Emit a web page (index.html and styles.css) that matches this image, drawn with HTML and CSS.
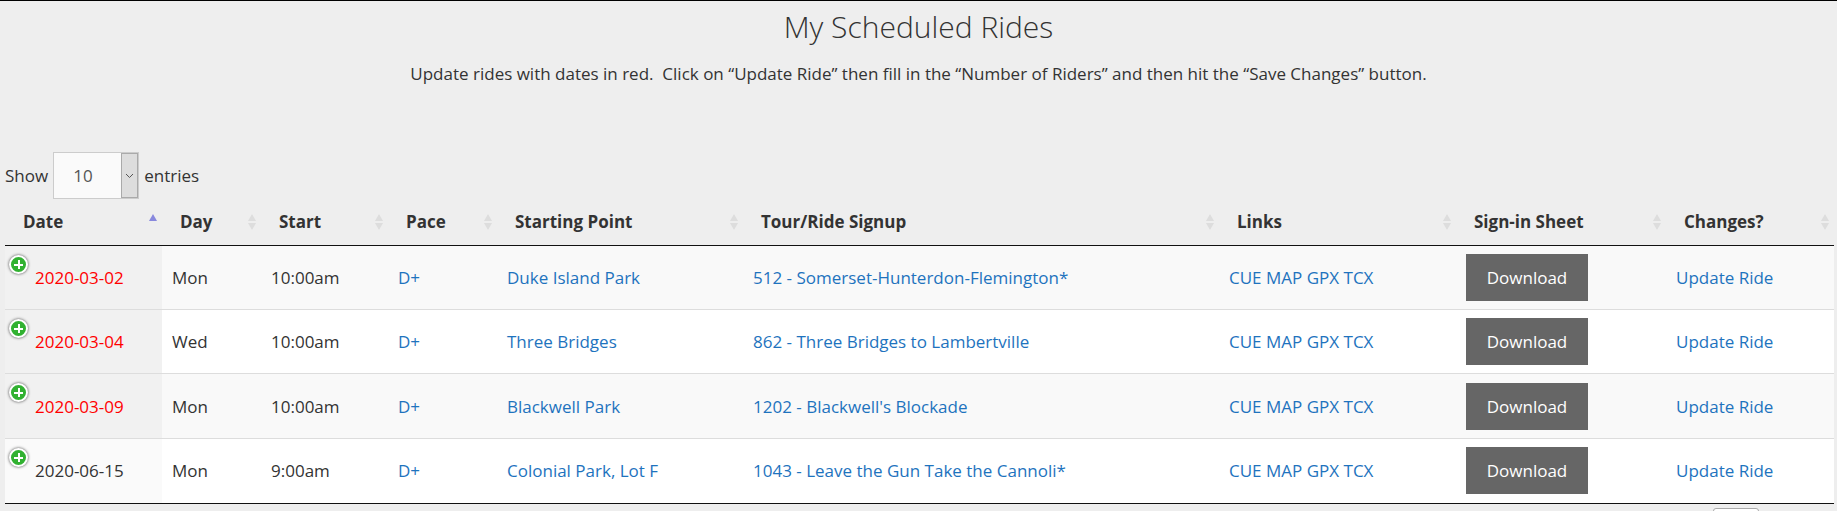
FILE: index.html
```html
<!DOCTYPE html>
<html lang="en">
<head>
<meta charset="utf-8">
<title>My Scheduled Rides</title>
<link rel="stylesheet" href="styles.css">
</head>
<body>
<h1 class="title">My Scheduled Rides</h1>
<p class="intro">Update rides with dates in red.&nbsp; Click on “Update Ride” then fill in the “Number of Riders” and then hit the “Save Changes” button.</p>
<div class="wrap">
  <div class="length">Show <span class="select"><span class="select-val">10</span><span class="select-btn"><svg width="9" height="6" viewBox="0 0 9 6"><path d="M1 1l3.5 3.5L8 1" fill="none" stroke="#555" stroke-width="1"/></svg></span></span> entries</div>
  <table class="rides">
    <colgroup>
      <col class="c1"><col class="c2"><col class="c3"><col class="c4"><col class="c5"><col class="c6"><col class="c7"><col class="c8"><col class="c9">
    </colgroup>
    <thead>
      <tr>
        <th class="asc">Date</th><th>Day</th><th>Start</th><th>Pace</th><th>Starting Point</th><th>Tour/Ride Signup</th><th>Links</th><th>Sign-in Sheet</th><th>Changes?</th>
      </tr>
    </thead>
    <tbody>
      <tr class="odd">
        <td class="date late"><span class="plus"></span>2020-03-02</td><td>Mon</td><td>10:00am</td><td><a href="#">D+</a></td><td><a href="#">Duke Island Park</a></td><td><a href="#">512 - Somerset-Hunterdon-Flemington*</a></td><td><a href="#">CUE</a> <a href="#">MAP</a> <a href="#">GPX</a> <a href="#">TCX</a></td><td><a class="btn" href="#">Download</a></td><td><a href="#">Update Ride</a></td>
      </tr>
      <tr>
        <td class="date late"><span class="plus"></span>2020-03-04</td><td>Wed</td><td>10:00am</td><td><a href="#">D+</a></td><td><a href="#">Three Bridges</a></td><td><a href="#">862 - Three Bridges to Lambertville</a></td><td><a href="#">CUE</a> <a href="#">MAP</a> <a href="#">GPX</a> <a href="#">TCX</a></td><td><a class="btn" href="#">Download</a></td><td><a href="#">Update Ride</a></td>
      </tr>
      <tr class="odd">
        <td class="date late"><span class="plus"></span>2020-03-09</td><td>Mon</td><td>10:00am</td><td><a href="#">D+</a></td><td><a href="#">Blackwell Park</a></td><td><a href="#">1202 - Blackwell's Blockade</a></td><td><a href="#">CUE</a> <a href="#">MAP</a> <a href="#">GPX</a> <a href="#">TCX</a></td><td><a class="btn" href="#">Download</a></td><td><a href="#">Update Ride</a></td>
      </tr>
      <tr>
        <td class="date"><span class="plus"></span>2020-06-15</td><td>Mon</td><td>9:00am</td><td><a href="#">D+</a></td><td><a href="#">Colonial Park, Lot F</a></td><td><a href="#">1043 - Leave the Gun Take the Cannoli*</a></td><td><a href="#">CUE</a> <a href="#">MAP</a> <a href="#">GPX</a> <a href="#">TCX</a></td><td><a class="btn" href="#">Download</a></td><td><a href="#">Update Ride</a></td>
      </tr>
    </tbody>
  </table>
  <div class="after"><span class="pager"></span></div>
</div>
</body>
</html>
```
FILE: styles.css
```css
* { box-sizing: border-box; }
html, body { margin: 0; height: 511px; overflow: hidden; }
body {
  background: #eee;
  border-top: 1px solid #000;
  font-family: "Open Sans", sans-serif;
  font-size: 17px;
  color: #333;
}
.title {
  margin: 0;
  padding-top: 6px;
  font-size: 30px;
  line-height: 40px;
  font-weight: 300;
  text-align: center;
  color: #333;
}
.intro {
  margin: 15px 0 0;
  line-height: 24px;
  text-align: center;
}
.wrap { padding: 0 3px 0 5px; }
.length {
  margin-top: 66px;
  display: flex;
  align-items: center;
  gap: 5px;
  height: 47px;
}
.select {
  display: flex;
  width: 86px;
  height: 47px;
  background: #fafafa;
  border: 1px solid #ccc;
}
.select-val { flex: 1; padding-left: 19px; line-height: 45px; color: #555; }
.select-btn {
  width: 17px;
  background: #ddd;
  border: 1px solid #aaa;
  display: flex;
  align-items: center;
  justify-content: center;
}
.rides {
  width: 1829px;
  table-layout: fixed;
  border-collapse: separate;
  border-spacing: 0;
  border-bottom: 1px solid #111;
}
.c1 { width: 157px; } .c2 { width: 99px; } .c3 { width: 127px; } .c4 { width: 109px; }
.c5 { width: 246px; } .c6 { width: 476px; } .c7 { width: 237px; } .c8 { width: 210px; } .c9 { width: 168px; }
th {
  position: relative;
  height: 47px;
  padding: 0 18px 1px;
  border-bottom: 1px solid #111;
  text-align: left;
  font-weight: 700;
  font-size: 17px;
}
th::before, th::after {
  content: "";
  position: absolute;
  right: 5px;
  border-left: 4px solid transparent;
  border-right: 4px solid transparent;
}
th::before { top: 15px; border-bottom: 7px solid #ddd; }
th::after { top: 24px; border-top: 7px solid #ddd; }
th.asc::before { border-bottom-color: #8888dd; }
th.asc::after { display: none; }
td {
  height: 65px;
  padding: 0 10px;
  background: #fff;
  border-top: 1px solid #ddd;
  vertical-align: middle;
}
tbody tr:first-child td { border-top: 0; height: 63px; }
tbody tr:nth-child(2) td { height: 64px; }
tbody tr:last-child td { padding-bottom: 1px; }
.odd td { background: #f9f9f9; }
td.date { position: relative; padding-left: 30px; background: #fafafa; }
.odd td.date { background: #f1f1f1; }
td.late { background: #f1f1f1; color: #f00; }
.plus {
  position: absolute;
  left: 4px;
  top: 9px;
  width: 19px;
  height: 19px;
  border-radius: 50%;
  background: #31b131;
  border: 2px solid #fff;
  box-shadow: 0 0 3px #444;
}
.plus::before {
  content: "";
  position: absolute;
  left: 3px; top: 6.5px; width: 9px; height: 2px;
  background: #fff;
}
.plus::after {
  content: "";
  position: absolute;
  left: 6.5px; top: 3px; width: 2px; height: 9px;
  background: #fff;
}
a { color: #1e73be; text-decoration: none; }
.btn {
  display: block;
  width: 122px;
  height: 47px;
  line-height: 47px;
  text-align: center;
  background: #666;
  color: #fff;
}
.after { display: flex; justify-content: flex-end; }
.pager {
  width: 46px;
  height: 10px;
  margin: 4px 75px 0 0;
  border: 1px solid #aaa;
  border-radius: 3px 3px 0 0;
  background: #fff;
}
```
